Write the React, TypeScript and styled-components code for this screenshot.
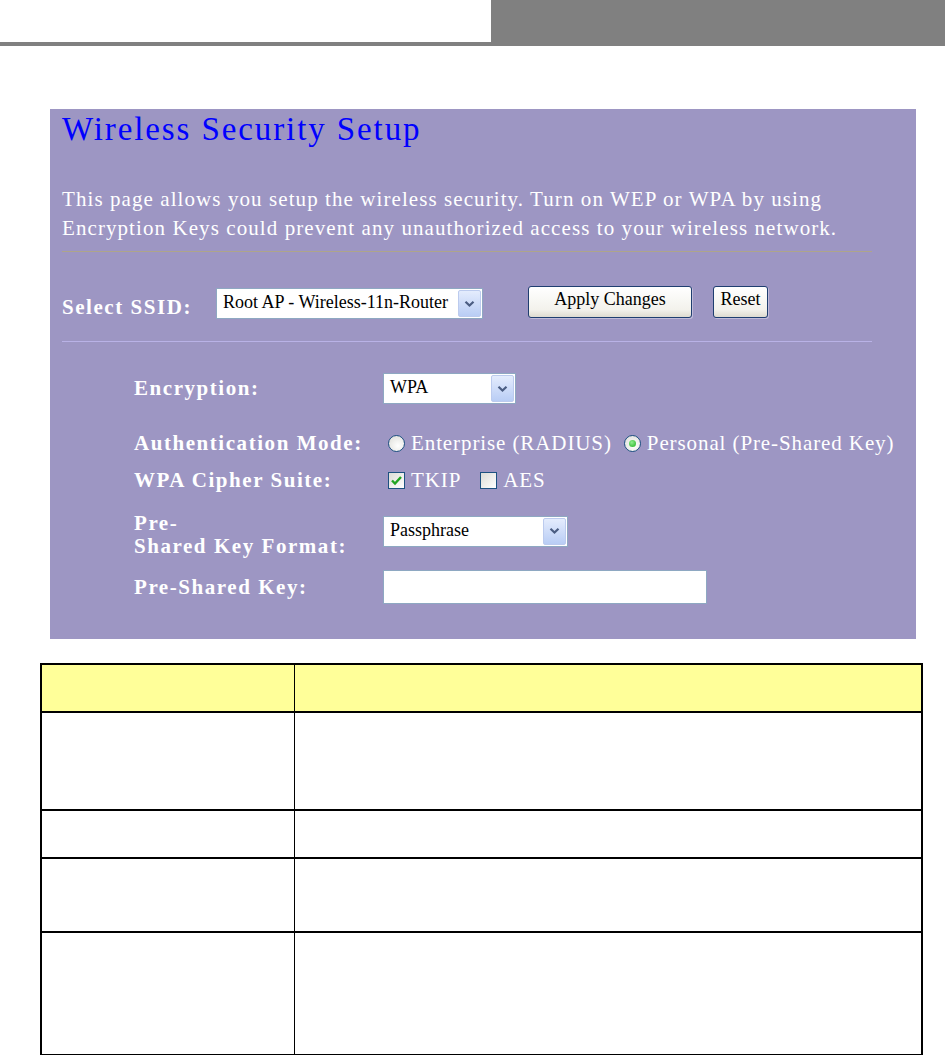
import React from "react";
import styled, { createGlobalStyle } from "styled-components";

const GlobalStyle = createGlobalStyle`
  html, body { margin: 0; padding: 0; background: #ffffff; }
  body { font-family: "Liberation Serif", "Times New Roman", serif; }
  * { box-sizing: border-box; }
`;

const Page = styled.div`
  display: flex;
  flex-direction: column;
  width: 945px;
`;

const TopBar = styled.header`
  display: flex;
  height: 46px;
`;

const TopLeft = styled.div`
  flex: 0 0 491px;
  border-bottom: 4px solid #808080;
`;

const TopRight = styled.div`
  flex: 1;
  background: #808080;
`;

const Panel = styled.section`
  margin: 63px 0 0 50px;
  width: 866px;
  height: 530px;
  background: #9d96c3;
  padding: 0 44px 0 12px;
  display: flex;
  flex-direction: column;
`;

const Title = styled.h1`
  margin: 0;
  font-family: "Liberation Serif", serif;
  font-weight: normal;
  font-size: 33px;
  line-height: 40px;
  letter-spacing: 1.9px;
  color: #0000ff;
`;

const Desc = styled.p`
  margin: 36px 0 0;
  font-size: 21px;
  line-height: 29px;
  letter-spacing: 1.08px;
  color: #ffffff;
`;

const Rule = styled.div<{ $color: string; $top: number }>`
  height: 1px;
  margin-top: ${(p) => p.$top}px;
  background: ${(p) => p.$color};
`;

const SsidRow = styled.div`
  display: flex;
  align-items: flex-start;
  margin-top: 34px;
  height: 32px;
`;

const BoldLabel = styled.span`
  font-weight: bold;
  font-size: 21px;
  line-height: 23px;
  letter-spacing: 1.55px;
  color: #ffffff;
`;

const SsidLabel = styled(BoldLabel)`
  flex: 0 0 154px;
  margin-top: 9px;
  line-height: 24px;
`;

const SelectBox = styled.div<{ $w: number; $top?: number }>`
  display: flex;
  align-items: stretch;
  width: ${(p) => p.$w}px;
  height: 31px;
  margin-top: ${(p) => p.$top ?? 0}px;
  padding: 1px;
  background: #ffffff;
  border: 1px solid #8ea8c2;
`;

const SelectText = styled.span`
  flex: 1;
  padding-left: 5px;
  font-family: "Liberation Serif", serif;
  font-size: 18px;
  line-height: 25px;
  color: #000000;
  white-space: nowrap;
  overflow: hidden;
`;

const DropButton = styled.span`
  flex: 0 0 23px;
  display: flex;
  align-items: center;
  justify-content: center;
  border: 1px solid #bccbee;
  border-radius: 2px;
  background: linear-gradient(#e4ecfd, #b9cdf5);
`;

const Button = styled.button<{ $w: number; $left: number }>`
  width: ${(p) => p.$w}px;
  height: 32px;
  margin-left: ${(p) => p.$left}px;
  padding: 0 0 6px;
  font-family: "Liberation Serif", serif;
  font-size: 18px;
  color: #000000;
  border: 1px solid #1f3e70;
  border-radius: 3px;
  background: linear-gradient(#ffffff, #f3f2ec 75%, #dedbd0);
  box-shadow: 1px 1px 0 rgba(255, 255, 255, 0.35);
`;

const Form = styled.div`
  display: flex;
  flex-direction: column;
  padding-left: 72px;
`;

const FormRow = styled.div<{ $top: number; $h: number }>`
  display: flex;
  align-items: center;
  margin-top: ${(p) => p.$top}px;
  height: ${(p) => p.$h}px;
`;

const FormLabel = styled(BoldLabel)<{ $drop?: number }>`
  flex: 0 0 249px;
  padding-top: ${(p) => p.$drop ?? 0}px;
`;

const Options = styled.div`
  display: flex;
  align-items: center;
  padding-left: 5px;
`;

const OptionText = styled.span<{ $gap: number }>`
  margin: 0 ${(p) => p.$gap}px 0 6px;
  font-size: 21px;
  line-height: 24px;
  letter-spacing: 0.9px;
  color: #ffffff;
  white-space: nowrap;
`;

const RadioDot = styled.span<{ $on?: boolean }>`
  position: relative;
  flex: 0 0 17px;
  height: 17px;
  border-radius: 50%;
  border: 1px solid #1d5181;
  background: radial-gradient(circle at 60% 65%, #ffffff, #dcdcd6);
  &::after {
    content: "";
    display: ${(p) => (p.$on ? "block" : "none")};
    position: absolute;
    left: 4px;
    top: 4px;
    width: 7px;
    height: 7px;
    border-radius: 50%;
    background: radial-gradient(circle at 40% 35%, #8fef8f, #1fae1f);
  }
`;

const CheckBox = styled.span`
  flex: 0 0 17px;
  height: 17px;
  display: flex;
  align-items: center;
  justify-content: center;
  border: 1px solid #1d5181;
  background: linear-gradient(135deg, #dcdcd6, #ffffff);
`;

const TextInput = styled.input`
  width: 324px;
  height: 34px;
  border: 1px solid #8ea8c2;
  background: #ffffff;
  outline: none;
`;

const Table = styled.table`
  margin: 24px 0 0 40px;
  width: 883px;
  border-collapse: collapse;
  table-layout: fixed;
`;

const Tr = styled.tr<{ $h: number }>`
  height: ${(p) => p.$h}px;
`;

const Cell = styled.td<{ $head?: boolean; $w?: number }>`
  ${(p) => (p.$w ? `width: ${p.$w}px;` : "")}
  padding: 0;
  border-top: 2px solid #000000;
  border-bottom: 2px solid #000000;
  border-left: 1px solid #000000;
  border-right: 1px solid #000000;
  background: ${(p) => (p.$head ? "#ffff99" : "#ffffff")};
  &:first-child { border-left: 2px solid #000000; }
  &:last-child { border-right: 2px solid #000000; }
`;

const Chevron = () => (
  <svg width="11" height="8" viewBox="0 0 11 8">
    <path d="M1.5 1.8 L5.5 5.6 L9.5 1.8" fill="none" stroke="#4b5d82" strokeWidth="2.2" />
  </svg>
);

const Check = () => (
  <svg width="13" height="11" viewBox="0 0 13 11">
    <path d="M2 5.5 L5 8.5 L11 2" fill="none" stroke="#21a421" strokeWidth="2.4" />
  </svg>
);

const Select = ({ w, value, top }: { w: number; value: string; top?: number }) => (
  <SelectBox $w={w} $top={top}>
    <SelectText>{value}</SelectText>
    <DropButton>
      <Chevron />
    </DropButton>
  </SelectBox>
);

const rows = [98, 48, 74, 123];

export default function App() {
  return (
    <Page>
      <GlobalStyle />
      <TopBar>
        <TopLeft />
        <TopRight />
      </TopBar>
      <Panel>
        <Title>Wireless Security Setup</Title>
        <Desc>
          This page allows you setup the wireless security. Turn on WEP or WPA by using
          <br />
          Encryption Keys could prevent any unauthorized access to your wireless network.
        </Desc>
        <Rule $color="#aea58a" $top={8} />
        <SsidRow>
          <SsidLabel>Select SSID:</SsidLabel>
          <Select w={267} value="Root AP - Wireless-11n-Router" top={2} />
          <Button $w={164} $left={45}>Apply Changes</Button>
          <Button $w={55} $left={21}>Reset</Button>
        </SsidRow>
        <Rule $color="#b9b2e6" $top={23} />
        <Form>
          <FormRow $top={31} $h={31}>
            <FormLabel>Encryption:</FormLabel>
            <Select w={133} value="WPA" />
          </FormRow>
          <FormRow $top={27} $h={24}>
            <FormLabel>Authentication Mode:</FormLabel>
            <Options>
              <RadioDot />
              <OptionText $gap={12}>Enterprise (RADIUS)</OptionText>
              <RadioDot $on />
              <OptionText $gap={0}>Personal (Pre-Shared Key)</OptionText>
            </Options>
          </FormRow>
          <FormRow $top={13} $h={24}>
            <FormLabel>WPA Cipher Suite:</FormLabel>
            <Options>
              <CheckBox>
                <Check />
              </CheckBox>
              <OptionText $gap={19}>TKIP</OptionText>
              <CheckBox />
              <OptionText $gap={0}>AES</OptionText>
            </Options>
          </FormRow>
          <FormRow $top={16} $h={46}>
            <FormLabel $drop={8}>
              Pre-
              <br />
              Shared Key Format:
            </FormLabel>
            <Select w={185} value="Passphrase" />
          </FormRow>
          <FormRow $top={16} $h={34}>
            <FormLabel>Pre-Shared Key:</FormLabel>
            <TextInput type="text" aria-label="Pre-Shared Key" />
          </FormRow>
        </Form>
      </Panel>
      <Table>
        <tbody>
          <Tr $h={48}>
            <Cell $head $w={253} />
            <Cell $head />
          </Tr>
          {rows.map((h, i) => (
            <Tr key={i} $h={h}>
              <Cell />
              <Cell />
            </Tr>
          ))}
        </tbody>
      </Table>
    </Page>
  );
}
